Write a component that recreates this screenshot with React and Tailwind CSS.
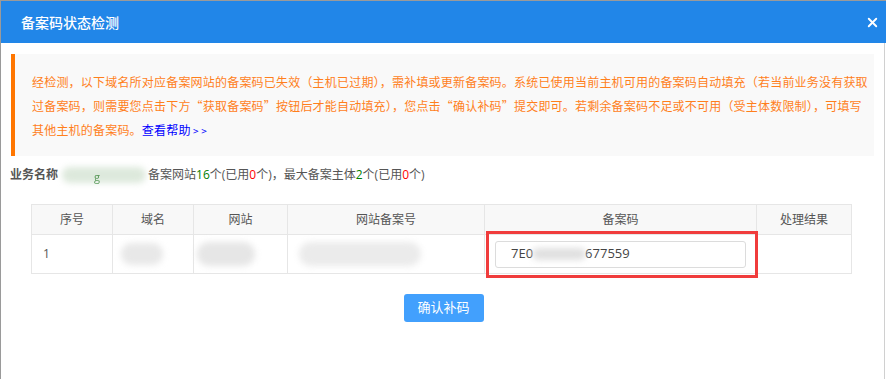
import { X } from "lucide-react";

const font = { fontFamily: '"Open Sans", "Noto Sans CJK SC", sans-serif' };
const cjk = { fontFamily: '"Noto Sans CJK SC", sans-serif' };

const Blur = ({ className }) => <span className={`inline-block rounded-full blur-[3px] ${className}`} />;

const App = () => {
    return (
        <div className="w-[886px] h-[379px] bg-[#9a9a9a] pt-[1px] pl-[1px] overflow-hidden" style={font}>
            <div className="w-[885px] h-[378px] bg-white">
                <div className="h-[42px] bg-[#2186e8] flex items-center justify-between pl-[20px] pr-[6px]">
                    <span className="text-white text-[14px] font-medium">备案码状态检测</span>
                    <X size={15} strokeWidth={3} className="text-white" />
                </div>
                <div className="flex">
                    <div className="w-[883px]">
                        <div
                            className="mt-[11px] ml-[10px] w-[863px] h-[102px] bg-[#f9f9f9] border-l-4 border-[#ff7600] pl-[17px] pt-[16px] text-[12px] leading-[24px] text-[#ff7f1c] tracking-[0.2px] whitespace-nowrap"
                            style={cjk}
                        >
                            经检测，以下域名所对应备案网站的备案码已失效（主机已过期），需补填或更新备案码。系统已使用当前主机可用的备案码自动填充（若当前业务没有获取
                            <br />
                            过备案码，则需要您点击下方“获取备案码”按钮后才能自动填充），您点击“确认补码”提交即可。若剩余备案码不足或不可用（受主体数限制），可填写
                            <br />
                            其他主机的备案码。<a className="text-[#0000ff]">查看帮助</a>
                            <span className="text-[#0000ff] text-[10px]"> &gt; &gt;</span>
                        </div>

                        <div className="mt-[10px] ml-[9px] flex items-center text-[12px] leading-[18px] text-[#555]">
                            <span className="font-bold">业务名称</span>
                            <span className="relative w-[90px] h-[18px]">
                                <Blur className="absolute left-[4px] top-[1px] w-[84px] h-[16px] bg-[#dde9dc]" />
                                <span className="absolute left-[36px] top-[2px] text-[#5a9a5a] text-[11px] blur-[0.6px]">g</span>
                            </span>
                            <span>
                                备案网站<span className="text-[#008000]">16</span>个(已用<span className="text-[#ff0000]">0</span>个)，最大备案主体<span className="text-[#008000]">2</span>个(已用<span className="text-[#ff0000]">0</span>个)
                            </span>
                        </div>

                        <div className="mt-[20px] ml-[30px] w-[821px]">
                            <table className="w-full border-collapse text-[12px] text-[#555] table-fixed">
                                <colgroup>
                                    <col className="w-[81px]" />
                                    <col className="w-[81px]" />
                                    <col className="w-[94px]" />
                                    <col className="w-[197px]" />
                                    <col className="w-[272px]" />
                                    <col className="w-[95px]" />
                                </colgroup>
                                <thead>
                                    <tr className="h-[30px] bg-[#f8f8f8]">
                                        {["序号", "域名", "网站", "网站备案号", "备案码", "处理结果"].map((h) => (
                                            <th key={h} className="border border-[#e6e6e6] font-normal text-center">
                                                {h}
                                            </th>
                                        ))}
                                    </tr>
                                </thead>
                                <tbody>
                                    <tr className="h-[39px]">
                                        <td className="border border-[#e6e6e6] pl-[11px]">1</td>
                                        <td className="border border-[#e6e6e6] pl-[8px]">
                                            <Blur className="w-[42px] h-[22px] bg-[#e8e8e8] align-middle" />
                                        </td>
                                        <td className="border border-[#e6e6e6] pl-[3px]">
                                            <Blur className="w-[58px] h-[24px] bg-[#e6e6e6] align-middle" />
                                        </td>
                                        <td className="border border-[#e6e6e6] pl-[11px]">
                                            <Blur className="w-[122px] h-[24px] bg-[#ebebeb] align-middle" />
                                        </td>
                                        <td className="border border-[#e6e6e6] relative px-[10px]">
                                            <div className="h-[27px] border border-[#dcdcdc] rounded-[3px] flex items-center pl-[15px] text-[13px] text-[#444]">
                                                <span>7E0</span>
                                                <Blur className="w-[54px] h-[12px] bg-[#e0e0e0] mx-[-1px]" />
                                                <span>677559</span>
                                            </div>
                                            <div className="absolute left-[1px] -right-[2px] -top-[4px] -bottom-[5px] border-[3px] border-[#f03c3c]" />
                                        </td>
                                        <td className="border border-[#e6e6e6]"></td>
                                    </tr>
                                </tbody>
                            </table>
                        </div>

                        <div className="mt-[20px] flex justify-center pl-[2px]">
                            <button className="w-[80px] h-[28px] rounded-[3px] bg-[#42a0fd] text-white text-[13px]">确认补码</button>
                        </div>
                    </div>
                    <div className="w-[1px] h-[336px] bg-[#d0d0d0]" />
                </div>
            </div>
        </div>
    );
};

export default App;
